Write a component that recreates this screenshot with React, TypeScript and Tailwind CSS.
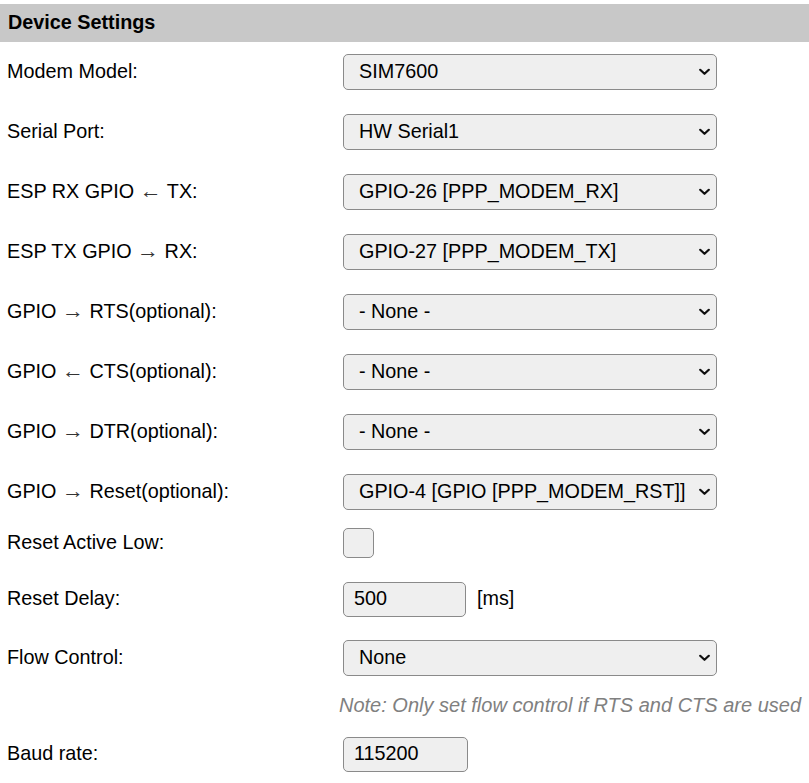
import { useState } from "react";

const FONT = { fontFamily: '"Liberation Sans", Arial, sans-serif' };

type SelectRow = { label: string; value: string };

const SELECT_ROWS: SelectRow[] = [
  { label: "Modem Model:", value: "SIM7600" },
  { label: "Serial Port:", value: "HW Serial1" },
  { label: "ESP RX GPIO ← TX:", value: "GPIO-26 [PPP_MODEM_RX]" },
  { label: "ESP TX GPIO → RX:", value: "GPIO-27 [PPP_MODEM_TX]" },
  { label: "GPIO → RTS(optional):", value: "- None -" },
  { label: "GPIO ← CTS(optional):", value: "- None -" },
  { label: "GPIO → DTR(optional):", value: "- None -" },
  { label: "GPIO → Reset(optional):", value: "GPIO-4 [GPIO [PPP_MODEM_RST]]" },
];

// arrows come out tiny in Liberation Sans, so bump them a bit
const renderLabel = (label: string) =>
  label.split(/([←→])/).map((part, i) =>
    part === "←" || part === "→" ? (
      <span key={i} className="inline-block text-[22px] leading-[0] text-[#333]">
        {part}
      </span>
    ) : (
      <span key={i}>{part}</span>
    ),
  );

const Chevron = () => (
  <svg width="11" height="7" viewBox="0 0 11 7" className="pointer-events-none absolute right-[6px] top-1/2 -translate-y-1/2">
    <path d="M1.2 1.2 5.5 5.3 9.8 1.2" fill="none" stroke="#111" strokeWidth="2.2" strokeLinecap="round" strokeLinejoin="round" />
  </svg>
);

const FakeSelect = ({ value }: { value: string }) => (
  <div className="relative flex h-[36px] w-[374px] items-center rounded-[5px] border border-[#8a8a8a] bg-[#efefef] pl-[15px] text-[19.8px] text-black">
    <span className="whitespace-nowrap">{value}</span>
    <Chevron />
  </div>
);

const Row = ({ label, height, children }: { label: string; height: string; children: React.ReactNode }) => (
  <div className={`flex items-center pl-[7px] ${height}`}>
    <div className="w-[336px] shrink-0 whitespace-nowrap text-[19.8px] text-black">{renderLabel(label)}</div>
    <div className="flex items-center">{children}</div>
  </div>
);

export default function App() {
  const [activeLow, setActiveLow] = useState(false);

  return (
    <div className="w-[809px] bg-white pt-[4px]" style={FONT}>
      <div className="flex h-[38px] items-center bg-[#c8c8c8] pl-[8px] text-[19.8px] font-bold text-black">
        Device Settings
      </div>

      {SELECT_ROWS.map((row) => (
        <Row key={row.label} label={row.label} height="h-[60px]">
          <FakeSelect value={row.value} />
        </Row>
      ))}

      <Row label="Reset Active Low:" height="h-[42px]">
        <button
          type="button"
          onClick={() => setActiveLow(!activeLow)}
          className="h-[30px] w-[31px] rounded-[5px] border border-[#8a8a8a] bg-[#efefef]"
        />
      </Row>

      <Row label="Reset Delay:" height="h-[70px]">
        <div className="flex h-[35px] w-[123px] items-center rounded-[5px] border border-[#8a8a8a] bg-[#efefef] pl-[10px] text-[19.8px] text-black">
          500
        </div>
        <span className="ml-[11px] text-[19.8px] text-black">[ms]</span>
      </Row>

      <Row label="Flow Control:" height="h-[48px]">
        <FakeSelect value="None" />
      </Row>

      <div className="flex h-[46px] items-center pl-[339px] text-[20px] italic text-[#808080]">
        Note: Only set flow control if RTS and CTS are used
      </div>

      <Row label="Baud rate:" height="h-[52px]">
        <div className="flex h-[35px] w-[125px] items-center rounded-[5px] border border-[#8a8a8a] bg-[#efefef] pl-[10px] text-[19.8px] text-black">
          115200
        </div>
      </Row>
    </div>
  );
}
